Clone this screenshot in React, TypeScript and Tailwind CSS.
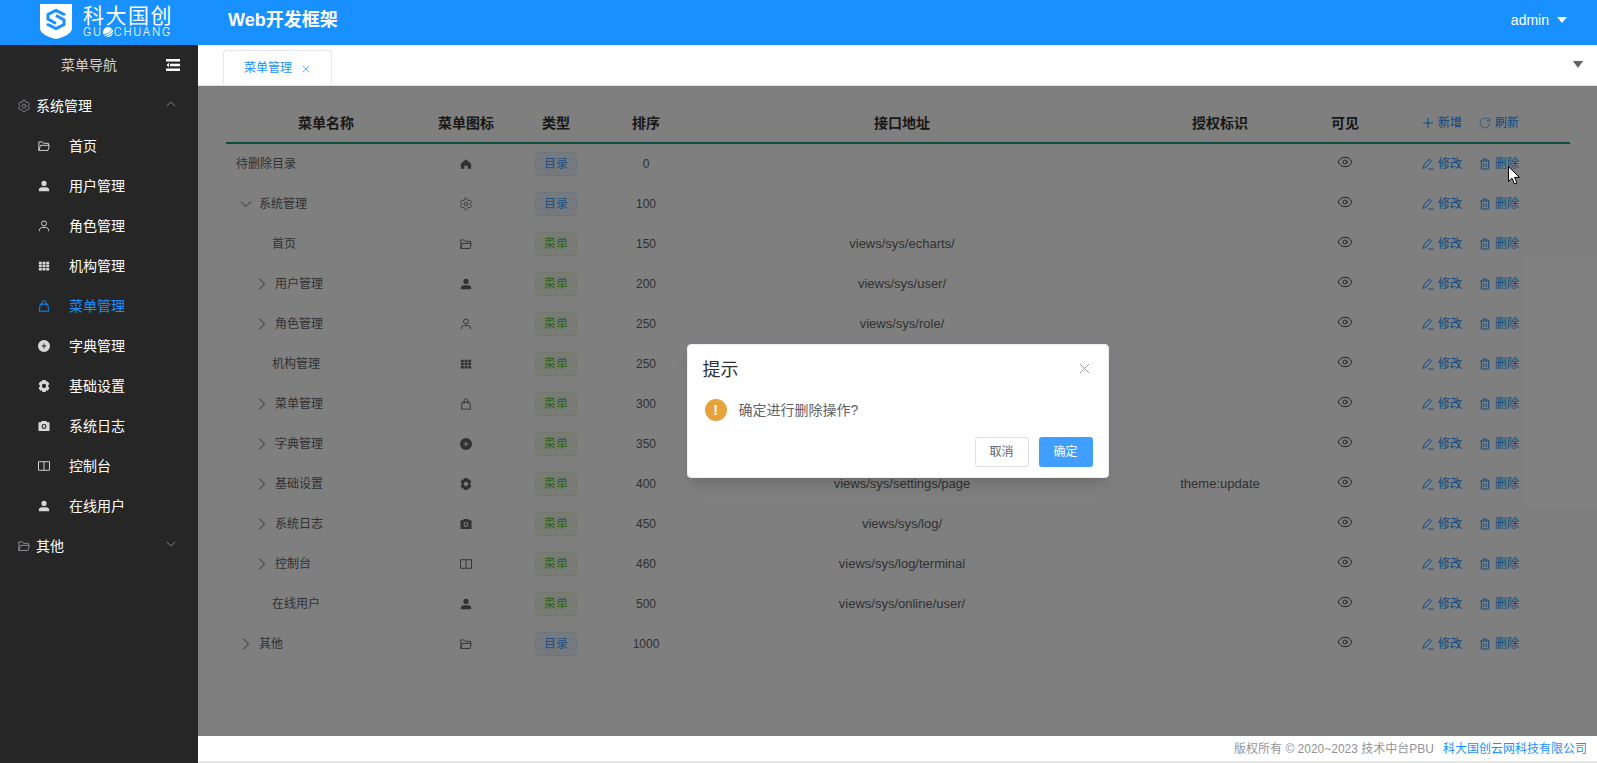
import { Eye, RotateCw, Settings } from "lucide-react";
import type { ReactNode } from "react";

const FONT = "font-['Liberation_Sans','Noto_Sans_CJK_SC',sans-serif]";

type IconName =
  | "folder"
  | "userSolid"
  | "user"
  | "grid"
  | "bag"
  | "plusSolid"
  | "tools"
  | "camera"
  | "book"
  | "home"
  | "setting";

const Svg = ({ children, className }: { children: ReactNode; className?: string }) => (
  <svg viewBox="0 0 14 14" fill="none" stroke="currentColor" strokeWidth="1.1" className={className}>
    {children}
  </svg>
);

const Icon = ({ name, className = "w-3.5 h-3.5" }: { name: IconName; className?: string }) => {
  switch (name) {
    case "folder":
      return (
        <Svg className={className}>
          <path d="M1 12.200V2.200h4.200l1.400 1.700h5.600v2.200" />
          <path d="M1 12.200h10.600l1.600-6H3L1 12.200z" />
        </Svg>
      );
    case "userSolid":
      return (
        <Svg className={className}>
          <circle cx="7" cy="4" r="3" fill="currentColor" stroke="none" />
          <path d="M1 13v-1.600C1 9.600 2.600 8.400 4.400 8.400h5.200c1.800 0 3.400 1.200 3.400 3V13z" fill="currentColor" stroke="none" />
        </Svg>
      );
    case "user":
      return (
        <Svg className={className}>
          <circle cx="7" cy="4" r="2.900" />
          <path d="M1.600 13v-1c0-1.900 1.600-3.200 3.400-3.200h4c1.800 0 3.400 1.300 3.400 3.200v1" />
        </Svg>
      );
    case "grid":
      return (
        <svg viewBox="0 0 14 14" fill="currentColor" className={className}>
          <path d="M1 2h3.400v3H1zM5.300 2h3.400v3H5.300zM9.600 2H13v3H9.600zM1 5.600h3.400v3H1zM5.300 5.600h3.400v3H5.300zM9.600 5.600H13v3H9.600zM1 9.200h3.400v3H1zM5.300 9.200h3.400v3H5.300zM9.600 9.200H13v3H9.600z" />
        </svg>
      );
    case "bag":
      return (
        <Svg className={className}>
          <path d="M2.600 4.800h8.800l1 8.200H1.600z" />
          <path d="M4.800 6.500V3c0-1.300.8-2.200 2.200-2.200S9.200 1.700 9.200 3v3.500" />
        </Svg>
      );
    case "plusSolid":
      return (
        <svg viewBox="1 1 12 12" fill="currentColor" className={className}>
          <path
            fillRule="evenodd"
            d="M7 1a6 6 0 1 1 0 12A6 6 0 0 1 7 1zM6.500 4.600v1.900H4.600v1h1.900v1.900h1V7.500h1.900v-1H7.500V4.600z"
          />
        </svg>
      );
    case "tools":
      return (
        <svg viewBox="1 .8 12 12.400" fill="currentColor" className={className}>
          <path
            fillRule="evenodd"
            d="M5.300 .8h3.400l.5 1.700 1.700-.4 1.700 2.900-1.200 1.300v1.400l1.200 1.300-1.700 2.900-1.700-.4-.5 1.700H5.300l-.5-1.700-1.700.4-1.700-2.900 1.200-1.300V6.300L1.400 5l1.700-2.900 1.700.4zM7 4.800a2.200 2.200 0 1 0 0 4.400 2.200 2.200 0 0 0 0-4.400z"
          />
        </svg>
      );
    case "camera":
      return (
        <svg viewBox=".5 .5 13 13" fill="currentColor" className={className}>
          <path
            fillRule="evenodd"
            d="M4.500 1.500h5l.8 1.500h2.200c.3 0 .5.200.5.500v8.500c0 .3-.2.500-.5.500h-11c-.3 0-.5-.2-.5-.5V3.500c0-.3.200-.5.500-.5h2.200zM7 4.800a2.700 2.700 0 1 0 0 5.400 2.700 2.700 0 0 0 0-5.400zM7 6a1.500 1.500 0 1 1 0 3 1.500 1.500 0 0 1 0-3z"
          />
        </svg>
      );
    case "book":
      return (
        <Svg className={className}>
          <path d="M.6 2h12.800v10H.6zM7 2v10" />
        </Svg>
      );
    case "home":
      return (
        <svg viewBox="0 0 14 14" fill="currentColor" className={className}>
          <path d="M7 1.500l6 5.300V12.500H9V9H5v3.500H1V6.800z" />
        </svg>
      );
    case "setting":
      return <Settings className={`${className} scale-[1.2]`} strokeWidth={1.3} />;
  }
};

const Chevron = ({ dir, className }: { dir: "up" | "down" | "right"; className: string }) => {
  const d = dir === "up" ? "M1 8.500l5-5 5 5" : dir === "down" ? "M1 3.500l5 5 5-5" : "M3.500 1l5 5-5 5";
  return (
    <svg viewBox="0 0 12 12" fill="none" stroke="currentColor" strokeWidth="1" className={className}>
      <path d={d} />
    </svg>
  );
};

const Cross = ({ className }: { className: string }) => (
  <svg viewBox="0 0 12 12" fill="none" stroke="currentColor" strokeWidth="1" className={className}>
    <path d="M1 1l10 10M11 1L1 11" />
  </svg>
);

const PlusIcon = () => (
  <svg viewBox="0 0 12 12" fill="none" stroke="currentColor" strokeWidth="1" className="w-3 h-3">
    <path d="M6 1v10M1 6h10" />
  </svg>
);

const PenIcon = () => (
  <Svg className="w-3 h-3">
    <path d="M1.500 12.400l.6-4 6.200-7 2.600 2.300-6.200 7zM7.500 13h6" />
  </Svg>
);

const TrashIcon = () => (
  <Svg className="w-3 h-3">
    <path d="M1 3.500h12M5 3.500V1.200h4v2.300M2.800 3.500v9.300h8.400V3.500M5.700 6v4.500M8.300 6v4.500" />
  </Svg>
);

const Logo = () => (
  <svg viewBox="0 0 32 35" className="w-8 h-[35px]">
    <path d="M0 0H32V24C32 30 24 33 16 35C8 33 0 30 0 24Z" fill="#fff" />
    <path
      d="M24 11.500V10.500L16 6.500L8 10.500V15L16 19.500M8 19.500V20.500L16 24.500L24 20.500V16L16 11.500"
      fill="none"
      stroke="#1890ff"
      strokeWidth="3"
    />
  </svg>
);

const menus: { label: string; icon: IconName; active?: boolean }[] = [
  { label: "首页", icon: "folder" },
  { label: "用户管理", icon: "userSolid" },
  { label: "角色管理", icon: "user" },
  { label: "机构管理", icon: "grid" },
  { label: "菜单管理", icon: "bag", active: true },
  { label: "字典管理", icon: "plusSolid" },
  { label: "基础设置", icon: "tools" },
  { label: "系统日志", icon: "camera" },
  { label: "控制台", icon: "book" },
  { label: "在线用户", icon: "userSolid" },
];

interface Row {
  name: string;
  icon: IconName;
  dir?: boolean;
  sort: number;
  url?: string;
  auth?: string;
  indent: string;
  arrow?: "down" | "right";
}

const rows: Row[] = [
  { name: "待删除目录", icon: "home", dir: true, sort: 0, indent: "pl-[10px]" },
  { name: "系统管理", icon: "setting", dir: true, sort: 100, indent: "pl-[14px]", arrow: "down" },
  { name: "首页", icon: "folder", sort: 150, url: "views/sys/echarts/", indent: "pl-[46px]" },
  { name: "用户管理", icon: "userSolid", sort: 200, url: "views/sys/user/", indent: "pl-[30px]", arrow: "right" },
  { name: "角色管理", icon: "user", sort: 250, url: "views/sys/role/", indent: "pl-[30px]", arrow: "right" },
  { name: "机构管理", icon: "grid", sort: 250, url: "views/sys/dept/", indent: "pl-[46px]" },
  { name: "菜单管理", icon: "bag", sort: 300, url: "views/sys/menu/", indent: "pl-[30px]", arrow: "right" },
  { name: "字典管理", icon: "plusSolid", sort: 350, url: "views/sys/dict/", indent: "pl-[30px]", arrow: "right" },
  { name: "基础设置", icon: "tools", sort: 400, url: "views/sys/settings/page", auth: "theme:update", indent: "pl-[30px]", arrow: "right" },
  { name: "系统日志", icon: "camera", sort: 450, url: "views/sys/log/", indent: "pl-[30px]", arrow: "right" },
  { name: "控制台", icon: "book", sort: 460, url: "views/sys/log/terminal", indent: "pl-[30px]", arrow: "right" },
  { name: "在线用户", icon: "userSolid", sort: 500, url: "views/sys/online/user/", indent: "pl-[46px]" },
  { name: "其他", icon: "folder", dir: true, sort: 1000, indent: "pl-[14px]", arrow: "right" },
];

const GRID = "grid grid-cols-[200px_80px_100px_80px_432px_204px_46px_1fr] items-center";

const Sidebar = () => (
  <aside className="w-[198px] shrink-0 bg-[#262626] text-white">
    <div className="h-10 flex items-center">
      <span className="ml-[61px] text-sm text-[#d0d0d0]">菜单导航</span>
      <svg viewBox="0 0 14 12" className="ml-[49px] w-3.5 h-3" fill="#fff">
        <path d="M0 0h14v2.500H0zM4 4.700h10v2.500H4zM0 9.500h14V12H0zM3 3.800v4.400L.5 6z" />
      </svg>
    </div>
    <div className="h-10 mt-px flex items-center pl-[18px]">
      <Settings className="w-3 h-3 scale-[1.2] text-[#909399]" strokeWidth={1.4} />
      <span className="ml-1.5 text-sm">系统管理</span>
      <Chevron dir="up" className="ml-[74px] -mt-1 w-2.5 h-2.5 text-[#909399]" />
    </div>
    {menus.map((m) => (
      <div key={m.label} className="h-10 flex items-center pl-[38px]">
        <span className={m.active ? "text-[#1890ff]" : "text-[#d8d8d8]"}>
          <Icon name={m.icon} className="w-3 h-3" />
        </span>
        <span className={m.active ? "ml-[19px] text-sm text-[#1890ff]" : "ml-[19px] text-sm"}>{m.label}</span>
      </div>
    ))}
    <div className="h-10 flex items-center pl-[18px]">
      <span className="text-[#909399]">
        <Icon name="folder" className="w-3 h-3" />
      </span>
      <span className="ml-1.5 text-sm">其他</span>
      <Chevron dir="down" className="ml-[102px] -mt-1 w-2.5 h-2.5 text-[#909399]" />
    </div>
  </aside>
);

const TableRow = ({ row }: { row: Row }) => (
  <div className={`${GRID} h-10 text-xs text-[#606266]`}>
    <div className={`flex items-center gap-[7px] ${row.indent}`}>
      {row.arrow && <Chevron dir={row.arrow} className="w-3 h-3" />}
      <span>{row.name}</span>
    </div>
    <div className="flex justify-center">
      <Icon name={row.icon} className="w-3 h-3" />
    </div>
    <div className="flex justify-center">
      {row.dir ? (
        <span className="w-[42px] h-6 rounded border border-[#d9ecff] bg-[#ecf5ff] text-[#409eff] flex items-center justify-center">
          目录
        </span>
      ) : (
        <span className="w-[42px] h-6 rounded border border-[#e1f3d8] bg-[#f0f9eb] text-[#67c23a] flex items-center justify-center">
          菜单
        </span>
      )}
    </div>
    <div className="text-center">{row.sort}</div>
    <div className="text-center text-[13px]">{row.url}</div>
    <div className="text-center text-[13px]">{row.auth}</div>
    <div className="flex justify-center -mt-1 text-black">
      <Eye className="w-4 h-4" strokeWidth={1.1} />
    </div>
    <div className="flex items-center gap-[17px] pl-[54px] text-[#1890ff]">
      <span className="flex items-center gap-1">
        <PenIcon />
        修改
      </span>
      <span className="flex items-center gap-1">
        <TrashIcon />
        删除
      </span>
    </div>
  </div>
);

const Dialog = () => (
  <div className="w-[422px] h-[134px] bg-white rounded border border-[#ebeef5] shadow-lg px-[15px] pt-[15px]">
    <div className="flex items-start justify-between">
      <span className="text-lg leading-[20px] text-[#303133]">提示</span>
      <Cross className="w-[11px] h-[11px] mt-[3px] mr-[3px] text-[#909399]" />
    </div>
    <div className="mt-[19px] flex items-center gap-3 pl-[2px]">
      <span className="w-[22px] h-[22px] rounded-full bg-[#e6a23c] text-white text-sm font-bold flex items-center justify-center">
        !
      </span>
      <span className="text-sm text-[#606266]">确定进行删除操作?</span>
    </div>
    <div className="mt-[16px] flex justify-end gap-[10px]">
      <button className="w-[54px] h-[30px] rounded-[3px] border border-[#dcdfe6] bg-white text-xs text-[#606266]">
        取消
      </button>
      <button className="w-[54px] h-[30px] rounded-[3px] bg-[#409eff] text-xs text-white">确定</button>
    </div>
  </div>
);

const App = () => {
  return (
    <div className={`${FONT} h-screen flex flex-col overflow-hidden`}>
      <header className="h-[45px] shrink-0 bg-[#1890ff] text-white flex items-center">
        <div className="ml-10 -mt-0.5">
          <Logo />
        </div>
        <div className="ml-[11px] w-[90px] -mt-[3px] text-white">
          <div className="text-[21px] tracking-[1.5px] leading-[22px]">科大国创</div>
          <div className="flex items-center font-['Inter',sans-serif] font-light text-[11px] tracking-[1.7px] leading-[10px]">
            GU
            <svg viewBox="0 0 10 10" className="w-2.5 h-2.5 mr-px shrink-0">
              <circle cx="5" cy="5" r="5" fill="#fff" />
              <path d="M1 7.500C4 7.500 7.500 5.500 9 2.500M3 9C6 8.500 8.500 7 9.800 5" stroke="#1890ff" strokeWidth=".8" fill="none" />
            </svg>
            CHUANG
          </div>
        </div>
        <div className="ml-[55px] text-lg font-bold -mt-1.5">Web开发框架</div>
        <div className="ml-auto mr-[30px] flex items-center gap-2 text-sm -mt-1.5">
          admin
          <span className="w-0 h-0 border-x-[5px] border-x-transparent border-t-[6px] border-t-white" />
        </div>
      </header>
      <div className="flex-1 flex min-h-0">
        <Sidebar />
        <div className="flex-1 flex flex-col min-w-0">
          <div className="h-[41px] shrink-0 bg-white border-b border-[#dcdfe6] flex items-end pl-[25px] pr-[14px]">
            <div className="w-[109px] h-[35px] rounded-t border border-b-0 border-[#e4e7ed] flex items-center text-xs text-[#1890ff] pl-5">
              菜单管理
              <Cross className="ml-[10px] w-2 h-2 mt-px" />
            </div>
            <span className="ml-auto self-center mb-[2px] w-0 h-0 border-x-[5px] border-x-transparent border-t-[7px] border-t-[#606266]" />
          </div>
          <main className="flex-1 relative bg-white pt-[18px] pl-7 pr-[27px] min-h-0">
            <div className={`${GRID} h-10 border-b-2 border-[#1f9f80] text-sm font-bold text-[#303133]`}>
              <div className="text-center">菜单名称</div>
              <div className="text-center">菜单图标</div>
              <div className="text-center">类型</div>
              <div className="text-center">排序</div>
              <div className="text-center">接口地址</div>
              <div className="text-center">授权标识</div>
              <div className="text-center">可见</div>
              <div className="flex items-center gap-[17px] pl-[54px] text-xs font-normal text-[#1890ff]">
                <span className="flex items-center gap-1">
                  <PlusIcon />
                  新增
                </span>
                <span className="flex items-center gap-1">
                  <RotateCw className="w-3 h-3 scale-[1.1]" strokeWidth={1.2} />
                  刷新
                </span>
              </div>
            </div>
            {rows.map((r) => (
              <TableRow key={r.name + r.sort} row={r} />
            ))}
            <div className="absolute inset-0 bg-black/50 flex items-center justify-center">
              <Dialog />
            </div>
            <svg viewBox="0 0 12 19" className="absolute left-[1310px] top-[80px] w-3 h-[19px]">
              <path d="M.5.500v15l3.500-3.300 2.500 5.800 2.500-1-2.500-5.600h5z" fill="#fff" stroke="#000" strokeWidth="1" />
            </svg>
          </main>
          <footer className="h-[27px] shrink-0 bg-white border-b-2 border-[#e6e6e6] flex items-center justify-end pr-[10px] text-xs text-[#909399]">
            版权所有 © 2020~2023 技术中台PBU
            <span className="ml-[9px] text-[#1890ff]">科大国创云网科技有限公司</span>
          </footer>
        </div>
      </div>
    </div>
  );
};

export default App;
